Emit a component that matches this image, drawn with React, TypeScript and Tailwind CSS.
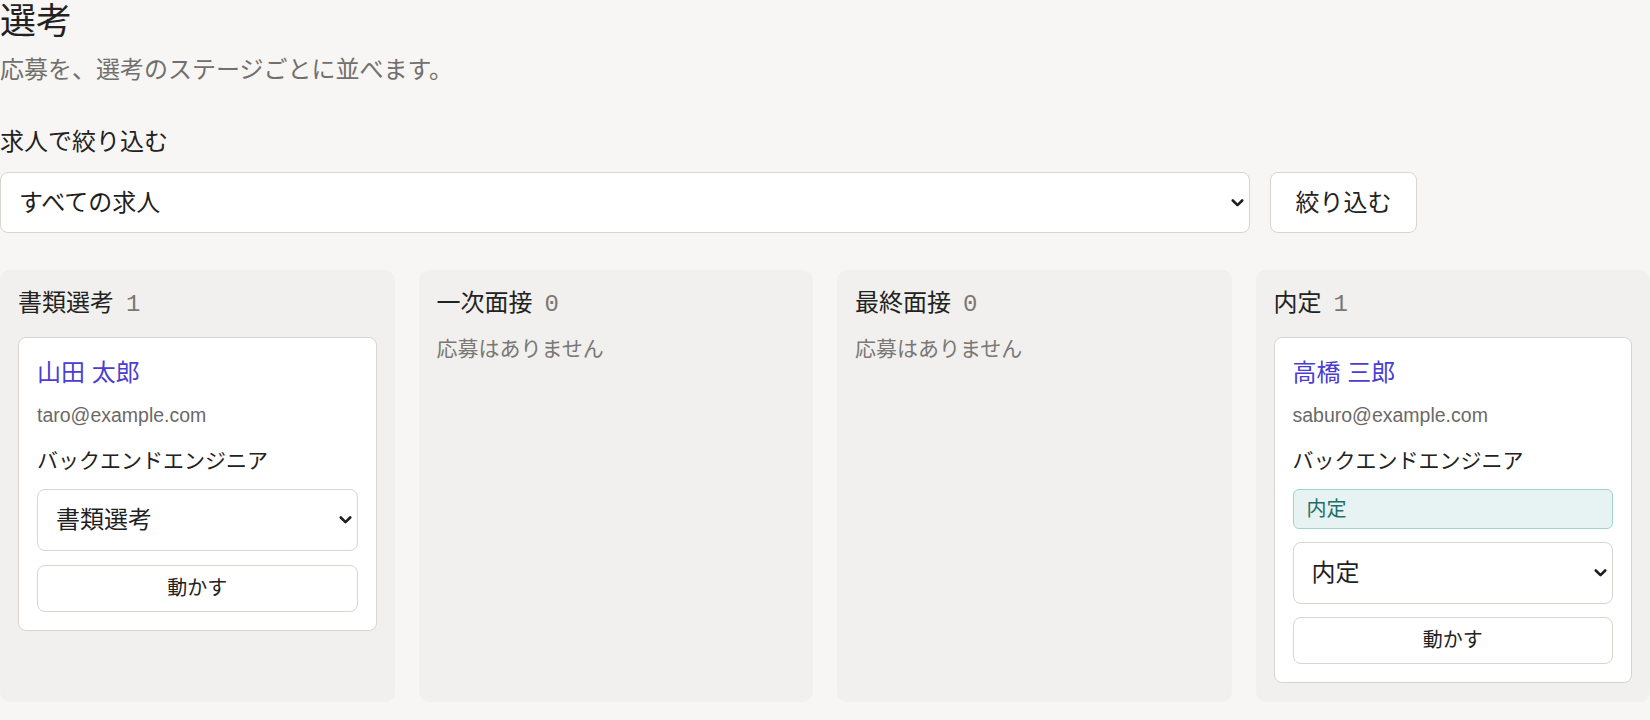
import React from "react";

function Chevron({ className }: { className?: string }) {
  return (
    <svg
      className={className}
      width="13"
      height="9"
      viewBox="0 0 13 9"
      fill="none"
      stroke="#1f1f1f"
      strokeWidth="2.6"
      strokeLinecap="round"
      strokeLinejoin="round"
    >
      <path d="M1.8 2 L6.5 6.7 L11.2 2" />
    </svg>
  );
}

function StageSelect({ value }: { value: string }) {
  return (
    <div className="relative mt-[13px]">
      <select
        defaultValue={value}
        className="block h-[62px] w-full appearance-none rounded-[8px] border border-[#d8d5d1] bg-white pl-[18px] pr-10 text-[24px] text-[#1f1f1f] outline-none"
      >
        <option>書類選考</option>
        <option>一次面接</option>
        <option>最終面接</option>
        <option>内定</option>
      </select>
      <Chevron className="pointer-events-none absolute right-[6px] top-1/2 -translate-y-1/2" />
    </div>
  );
}

function Card({
  name,
  email,
  job,
  stage,
  badge,
}: {
  name: string;
  email: string;
  job: string;
  stage: string;
  badge?: string;
}) {
  return (
    <div className="rounded-[8px] border border-[#d8d5d1] bg-white p-[18px]">
      <div className="text-[24px] leading-[34px] text-[#4a3dd2]">{name}</div>
      <div className="mt-[11px] font-['Liberation_Sans','Noto_Sans_CJK_JP',sans-serif] text-[19.5px] leading-[29px] text-[#6b6966]">
        {email}
      </div>
      <div className="mt-[15px] text-[21px] leading-[31.5px] text-[#222]">{job}</div>
      {badge ? (
        <div className="mt-[12px] flex h-[40px] items-center rounded-[6px] border border-[#a2d2d2] bg-[#e6f3f2] px-[13px] text-[20px] text-[#1d6d6b]">
          {badge}
        </div>
      ) : null}
      <div className={badge ? "" : "-mt-px"}>
        <StageSelect value={stage} />
      </div>
      <button
        className={
          badge
            ? "mt-[13px] block h-[47px] w-full rounded-[8px] border border-[#d8d5d1] bg-white text-[20px] text-[#222]"
            : "mt-[14px] block h-[47px] w-full rounded-[8px] border border-[#d8d5d1] bg-white text-[20px] text-[#222]"
        }
      >
        動かす
      </button>
    </div>
  );
}

function Column({
  title,
  count,
  children,
}: {
  title: string;
  count: number;
  children: React.ReactNode;
}) {
  return (
    <div className="rounded-[10px] bg-[#f1f0ee] px-[18px] pb-[19px] pt-[18px]">
      <div className="mb-[18px] flex items-baseline text-[24px] leading-[29px] text-[#222]">
        <span>{title}</span>
        <span className="ml-[12px] font-['Liberation_Mono',monospace] text-[#7a7874]">{count}</span>
      </div>
      {children}
    </div>
  );
}

export default function App() {
  return (
    <div className="min-h-screen bg-[#f7f6f4] font-['Liberation_Sans','Noto_Sans_CJK_JP',sans-serif] text-[#222]">
      <h1 className="text-[36px] font-normal leading-[43px] text-[#222]">選考</h1>
      <p className="mt-[9px] text-[24px] leading-[36px] text-[#72706c]">
        応募を、選考のステージごとに並べます。
      </p>
      <label className="mt-[36px] block text-[24px] leading-[36px] text-[#222]">求人で絞り込む</label>
      <div className="mt-[12px] flex gap-[20px]">
        <div className="relative w-[1250px] flex-none">
          <select className="block h-[61px] w-full appearance-none rounded-[8px] border border-[#d8d5d1] bg-white pl-[18px] pr-10 text-[24px] text-[#1f1f1f] outline-none">
            <option>すべての求人</option>
            <option>バックエンドエンジニア</option>
          </select>
          <Chevron className="pointer-events-none absolute right-[6px] top-1/2 -translate-y-1/2" />
        </div>
        <button className="h-[61px] w-[147px] flex-none rounded-[8px] border border-[#d8d5d1] bg-white text-[24px] text-[#222]">
          絞り込む
        </button>
      </div>
      <div className="mt-[37px] grid grid-cols-4 gap-6">
        <Column title="書類選考" count={1}>
          <Card
            name="山田 太郎"
            email="taro@example.com"
            job="バックエンドエンジニア"
            stage="書類選考"
          />
        </Column>
        <Column title="一次面接" count={0}>
          <div className="-mt-px text-[21px] leading-[25px] text-[#7a7874]">応募はありません</div>
        </Column>
        <Column title="最終面接" count={0}>
          <div className="-mt-px text-[21px] leading-[25px] text-[#7a7874]">応募はありません</div>
        </Column>
        <Column title="内定" count={1}>
          <Card
            name="高橋 三郎"
            email="saburo@example.com"
            job="バックエンドエンジニア"
            stage="内定"
            badge="内定"
          />
        </Column>
      </div>
    </div>
  );
}
